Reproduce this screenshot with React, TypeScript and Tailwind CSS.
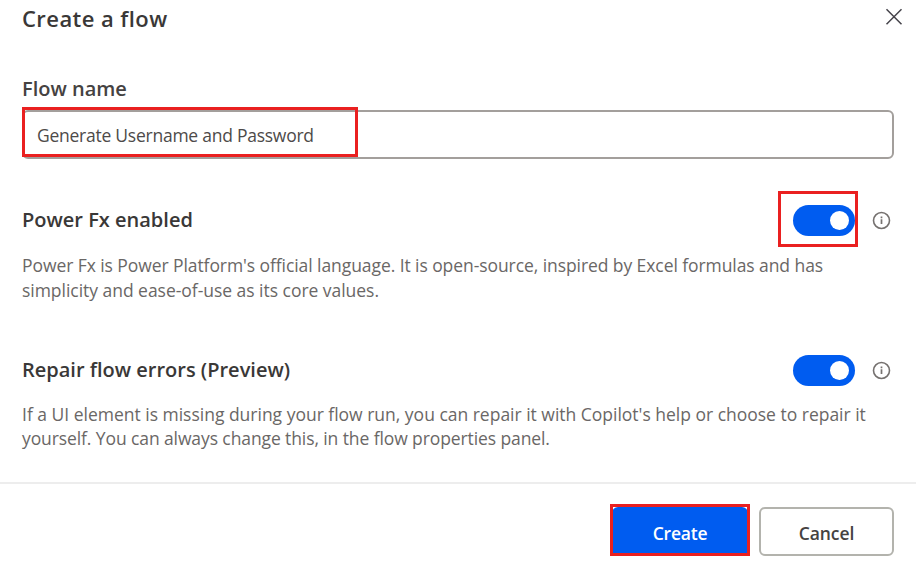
import type { ReactNode } from "react";

function Toggle({ highlighted = false }: { highlighted?: boolean }) {
  return (
    <div className="relative h-[31px] w-[62px]">
      <button
        type="button"
        role="switch"
        aria-checked="true"
        aria-label="Enabled"
        className="flex h-[31px] w-[62px] items-center justify-end rounded-full bg-[#005cf0] pr-1.5"
      >
        <span className="size-[19px] rounded-full bg-white" />
      </button>
      {highlighted && (
        <span className="pointer-events-none absolute -top-[14px] -left-[15px] h-[56px] w-[80px] border-3 border-[#ea2020]" />
      )}
    </div>
  );
}

function InfoIcon() {
  return (
    <svg width="19" height="19" viewBox="0 0 19 19" fill="none" stroke="#75716f" className="mt-px">
      <circle cx="9.5" cy="9.5" r="8" strokeWidth="1.6" />
      <path d="M9.5 8.2v4.9M9.5 5.5v1.7" strokeWidth="1.7" />
    </svg>
  );
}

function Setting({ title, highlighted, children }: { title: ReactNode; highlighted?: boolean; children: ReactNode }) {
  return (
    <section>
      <div className="flex h-[32px] items-center justify-between pr-[3px]">
        <h2 className="text-[20px] leading-8 font-semibold text-[#3a3837]">{title}</h2>
        <div className="flex items-center gap-[17px]">
          <Toggle highlighted={highlighted} />
          <InfoIcon />
        </div>
      </div>
      <div className="flex flex-col text-[17.5px] leading-[24.5px] whitespace-nowrap text-[#6a6766]">{children}</div>
    </section>
  );
}

export default function App() {
  return (
    <main className="flex h-[571px] w-[916px] flex-col overflow-hidden bg-white font-['Open_Sans',sans-serif]">
      <header className="flex h-[72px] items-start justify-between pr-[13px] pl-[22px]">
        <h1 className="mt-[2px] text-[22px] leading-8 font-semibold tracking-[0.43px] text-[#3a3837]">Create a flow</h1>
        <button type="button" aria-label="Close" className="mt-[8px]">
          <svg width="18" height="18" viewBox="0 0 18 18" fill="none" stroke="#45434a" strokeWidth="1.5">
            <path d="M1.5 1.3l15 15M16.5 1.3l-15 15" />
          </svg>
        </button>
      </header>

      <div className="flex flex-col pr-[22px] pl-[22px]">
        <label className="h-[38px] text-[20px] leading-[34px] font-semibold text-[#454241]">
          <span>Flow name</span>
        </label>
        <div className="relative flex h-[49px] items-center rounded-[6px] border-2 border-[#a39f9c] pt-px pl-[13px] text-[17.5px] tracking-[-0.25px] text-[#4d4a49]">
          <span>Generate Username and Password</span>
          <span className="pointer-events-none absolute -top-[5px] -left-[2px] h-[50px] w-[336px] border-3 border-[#ea2020]" />
        </div>
      </div>

      <div className="mt-[45px] flex h-[278px] flex-col gap-[52px] pr-[22px] pl-[22px]">
        <Setting title={<span>Power Fx enabled</span>} highlighted>
          <span className="mt-[17px] tracking-[-0.075px]">
            Power Fx is Power Platform's official language. It is open-source, inspired by Excel formulas and has
          </span>
          <span className="tracking-[-0.03px]">simplicity and ease-of-use as its core values.</span>
        </Setting>
        <Setting title={<span>Repair flow errors (Preview)</span>}>
          <span className="mt-[15.5px] tracking-[-0.01px]">
            If a UI element is missing during your flow run, you can repair it with Copilot's help or choose to repair it
          </span>
          <span className="tracking-[-0.1px]">yourself. You can always change this, in the flow properties panel.</span>
        </Setting>
      </div>

      <footer className="flex h-[89px] items-start justify-end gap-[11px] border-t-2 border-[#ededed] pt-[23px] pr-[22px] text-[17.5px] font-semibold">
        <button type="button" className="relative h-[49px] w-[136px] rounded-[6px] bg-[#005cf0] pt-[4px] tracking-[-0.2px] text-white">
          <span>Create</span>
          <span className="pointer-events-none absolute -top-[3px] -left-[2px] h-[52px] w-[140px] border-3 border-[#ea2020]" />
        </button>
        <button type="button" className="h-[49px] w-[135px] rounded-[6px] border-2 border-[#b3b3ad] pt-[4px] tracking-[-0.1px] text-[#454241]">
          <span>Cancel</span>
        </button>
      </footer>
    </main>
  );
}
